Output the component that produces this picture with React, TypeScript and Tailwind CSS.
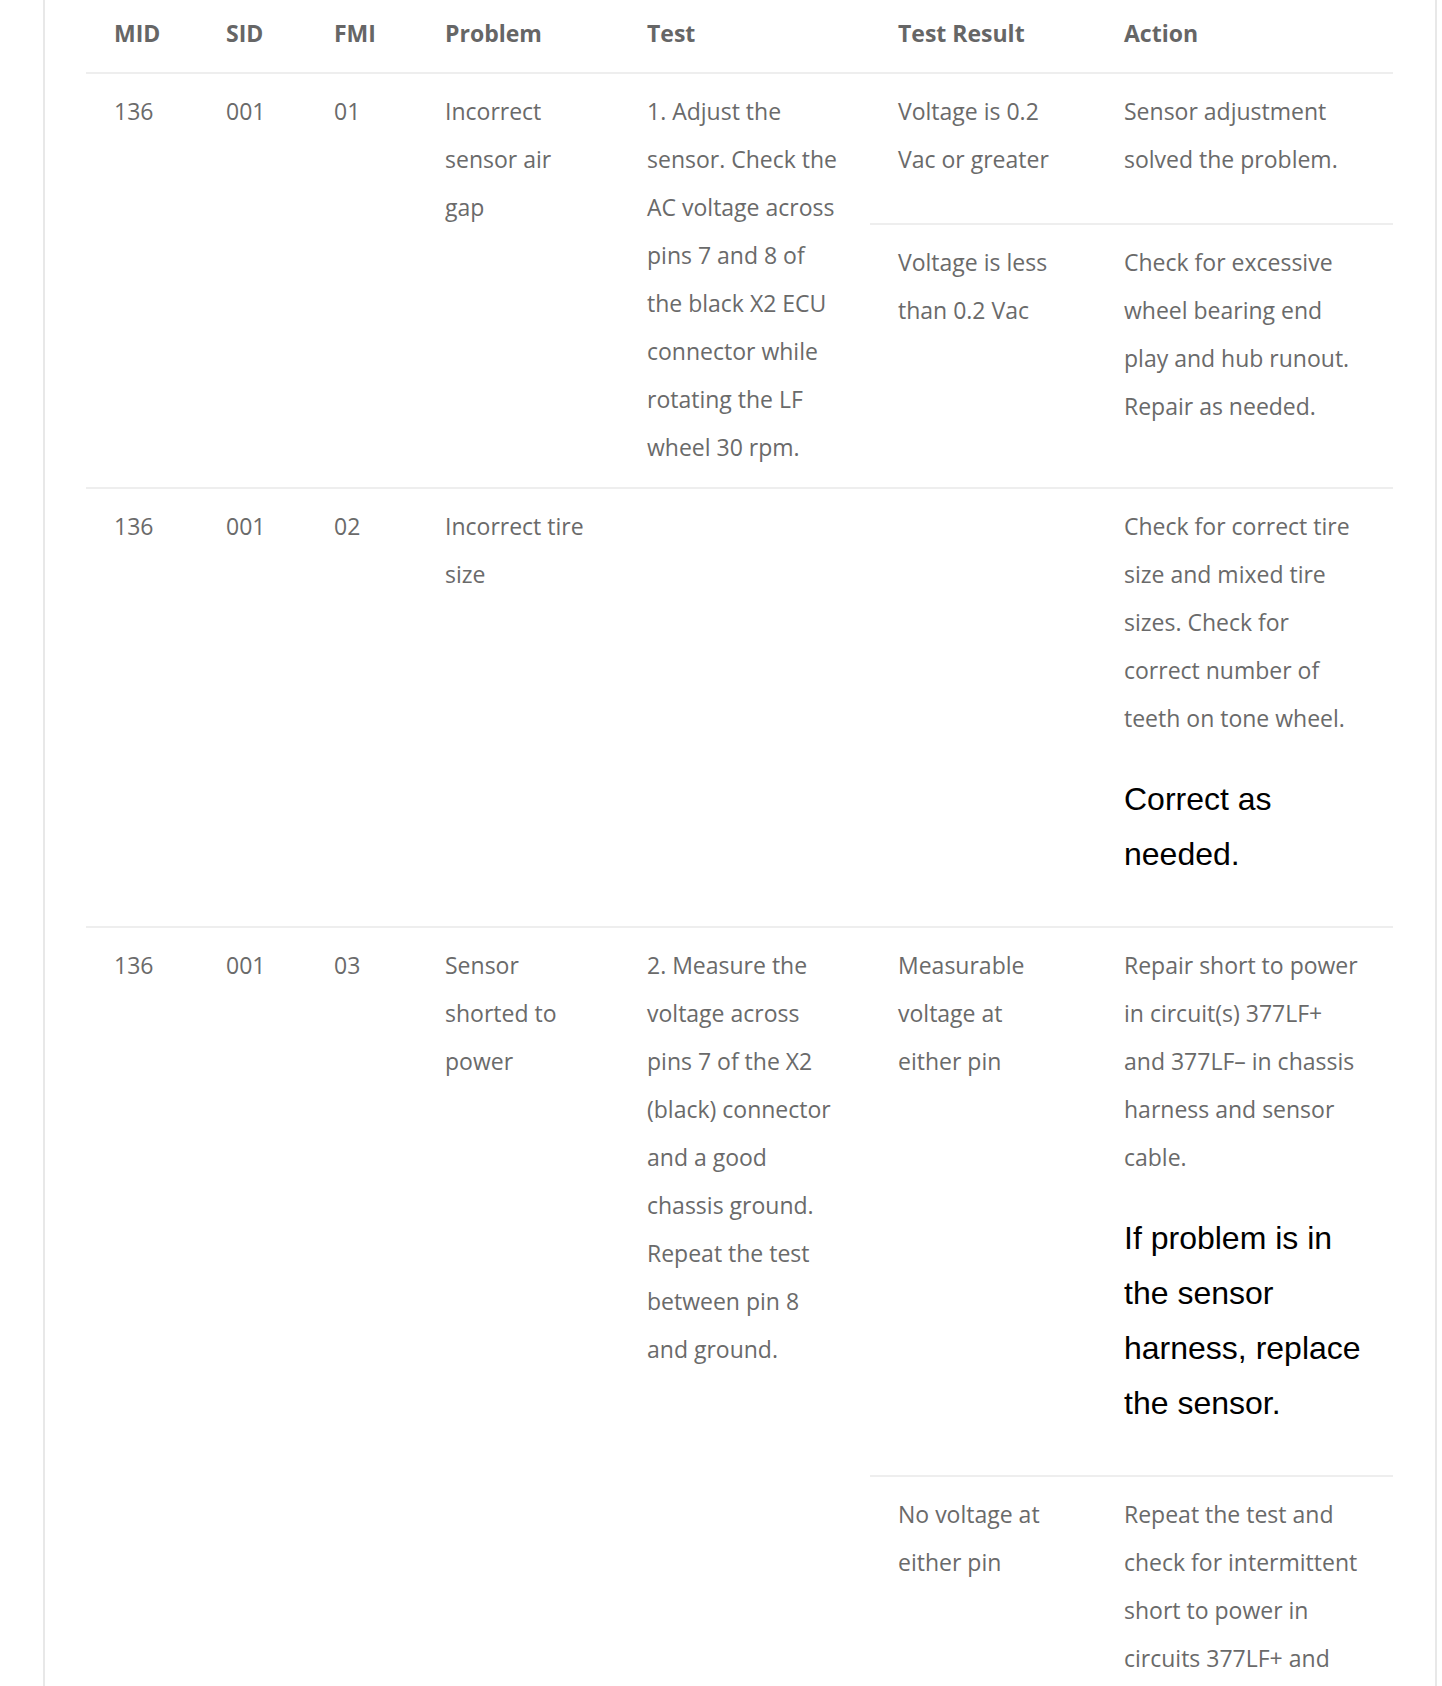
import React from 'react';

type Cell = string[];

const body = "font-['Open_Sans',sans-serif] text-[23px] leading-[48px] text-[#6a6a6a]";
const note = "font-['Liberation_Sans',Arial,sans-serif] text-[32px] leading-[55px] text-black mt-[30px] mb-[28px]";
const cell = 'align-top px-[28px] pt-[13px] pb-[16px] whitespace-nowrap';
const line = 'border-b-2 border-[#eeeeee]';

const Lines = ({ lines }: { lines: Cell }) => (
  <div className={body}>
    {lines.map((l, i) => (
      <React.Fragment key={i}>
        {l}
        {i < lines.length - 1 && <br />}
      </React.Fragment>
    ))}
  </div>
);

const Note = ({ lines }: { lines: Cell }) => (
  <p className={note}>
    {lines.map((l, i) => (
      <React.Fragment key={i}>
        {l}
        {i < lines.length - 1 && <br />}
      </React.Fragment>
    ))}
  </p>
);

const headers = ['MID', 'SID', 'FMI', 'Problem', 'Test', 'Test Result', 'Action'];

export default function App() {
  return (
    <div className="h-[1686px] overflow-hidden bg-white">
      <div className="ml-[43px] w-[1394px] h-full border-x-2 border-[#e8e8e8] px-[41px]">
        <table className="table-fixed border-collapse w-[1307px]">
          <colgroup>
            <col className="w-[112px]" />
            <col className="w-[108px]" />
            <col className="w-[111px]" />
            <col className="w-[202px]" />
            <col className="w-[251px]" />
            <col className="w-[226px]" />
            <col className="w-[297px]" />
          </colgroup>
          <thead>
            <tr>
              {headers.map((h) => (
                <th
                  key={h}
                  className={`${line} text-left align-top px-[28px] pt-[9px] pb-[15px] font-['Open_Sans',sans-serif] font-bold text-[23px] leading-[48px] text-[#666666] whitespace-nowrap`}
                >
                  {h}
                </th>
              ))}
            </tr>
          </thead>
          <tbody>
            {/* 01 - air gap */}
            <tr>
              <td rowSpan={2} className={`${cell} ${line}`}><Lines lines={['136']} /></td>
              <td rowSpan={2} className={`${cell} ${line}`}><Lines lines={['001']} /></td>
              <td rowSpan={2} className={`${cell} ${line}`}><Lines lines={['01']} /></td>
              <td rowSpan={2} className={`${cell} ${line}`}>
                <Lines lines={['Incorrect', 'sensor air', 'gap']} />
              </td>
              <td rowSpan={2} className={`${cell} ${line}`}>
                <Lines
                  lines={[
                    '1. Adjust the',
                    'sensor. Check the',
                    'AC voltage across',
                    'pins 7 and 8 of',
                    'the black X2 ECU',
                    'connector while',
                    'rotating the LF',
                    'wheel 30 rpm.',
                  ]}
                />
              </td>
              <td className={`${cell} ${line}`}><Lines lines={['Voltage is 0.2', 'Vac or greater']} /></td>
              <td className={`${cell} ${line}`}><Lines lines={['Sensor adjustment', 'solved the problem.']} /></td>
            </tr>
            <tr>
              <td className={`${cell} ${line}`}><Lines lines={['Voltage is less', 'than 0.2 Vac']} /></td>
              <td className={`${cell} ${line}`}>
                <Lines
                  lines={['Check for excessive', 'wheel bearing end', 'play and hub runout.', 'Repair as needed.']}
                />
              </td>
            </tr>

            {/* 02 - tire size */}
            <tr>
              <td className={`${cell} ${line}`}><Lines lines={['136']} /></td>
              <td className={`${cell} ${line}`}><Lines lines={['001']} /></td>
              <td className={`${cell} ${line}`}><Lines lines={['02']} /></td>
              <td className={`${cell} ${line}`}><Lines lines={['Incorrect tire', 'size']} /></td>
              <td className={`${cell} ${line}`} />
              <td className={`${cell} ${line}`} />
              <td className={`${cell} ${line}`}>
                <Lines
                  lines={[
                    'Check for correct tire',
                    'size and mixed tire',
                    'sizes. Check for',
                    'correct number of',
                    'teeth on tone wheel.',
                  ]}
                />
                <Note lines={['Correct as', 'needed.']} />
              </td>
            </tr>

            {/* 03 - shorted to power */}
            <tr>
              <td rowSpan={2} className={`${cell} ${line}`}><Lines lines={['136']} /></td>
              <td rowSpan={2} className={`${cell} ${line}`}><Lines lines={['001']} /></td>
              <td rowSpan={2} className={`${cell} ${line}`}><Lines lines={['03']} /></td>
              <td rowSpan={2} className={`${cell} ${line}`}>
                <Lines lines={['Sensor', 'shorted to', 'power']} />
              </td>
              <td rowSpan={2} className={`${cell} ${line}`}>
                <Lines
                  lines={[
                    '2. Measure the',
                    'voltage across',
                    'pins 7 of the X2',
                    '(black) connector',
                    'and a good',
                    'chassis ground.',
                    'Repeat the test',
                    'between pin 8',
                    'and ground.',
                  ]}
                />
              </td>
              <td className={`${cell} ${line}`}>
                <Lines lines={['Measurable', 'voltage at', 'either pin']} />
              </td>
              <td className={`${cell} ${line}`}>
                <Lines
                  lines={[
                    'Repair short to power',
                    'in circuit(s) 377LF+',
                    'and 377LF\u2013 in chassis',
                    'harness and sensor',
                    'cable.',
                  ]}
                />
                <Note lines={['If problem is in', 'the sensor', 'harness, replace', 'the sensor.']} />
              </td>
            </tr>
            <tr>
              <td className={`${cell} ${line}`}><Lines lines={['No voltage at', 'either pin']} /></td>
              <td className={`${cell} ${line}`}>
                <Lines
                  lines={[
                    'Repeat the test and',
                    'check for intermittent',
                    'short to power in',
                    'circuits 377LF+ and',
                    '377LF\u2013 in chassis',
                    'harness and sensor',
                    'cable.',
                  ]}
                />
              </td>
            </tr>
          </tbody>
        </table>
      </div>
    </div>
  );
}
